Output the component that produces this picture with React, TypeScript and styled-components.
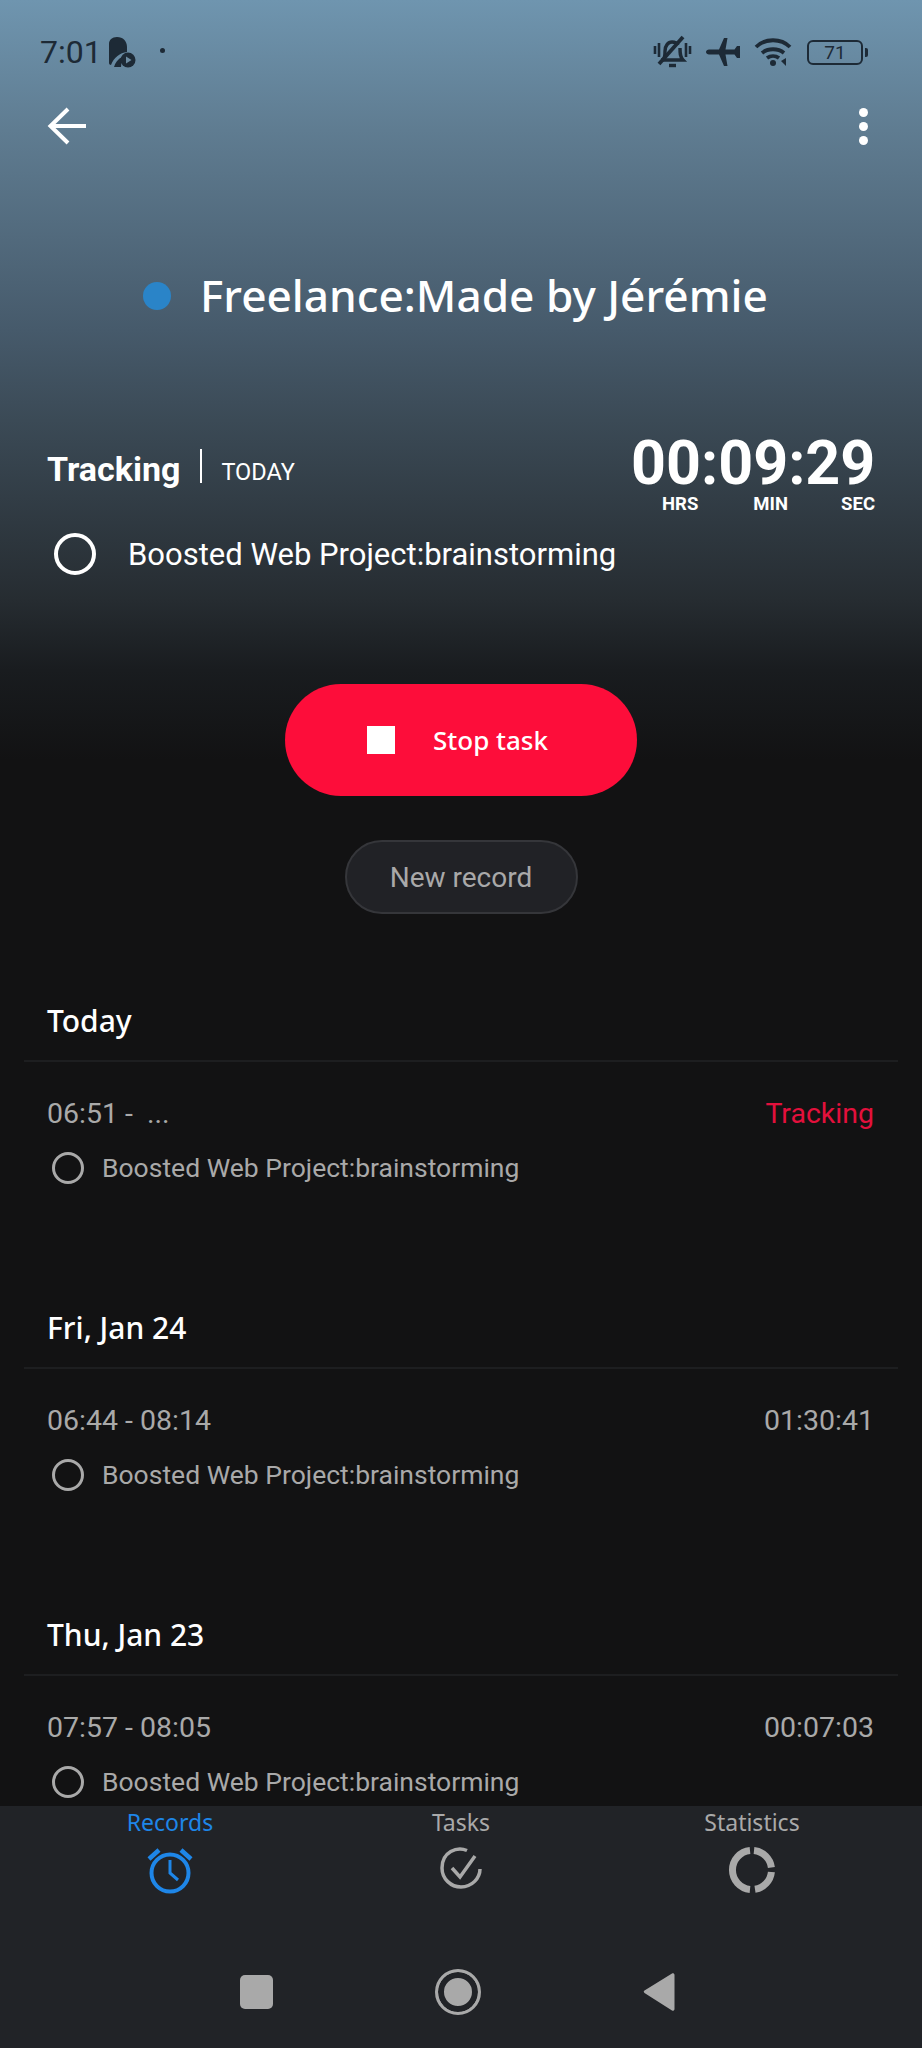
import * as React from "react";
import styled, { createGlobalStyle } from "styled-components";

const GlobalStyle = createGlobalStyle`
  html, body {
    margin: 0;
    padding: 0;
    background: #121213;
  }
  * {
    box-sizing: border-box;
  }
`;

const records = [
  { day: "Today", time: "06:51 -  ...", total: "Tracking", live: true },
  { day: "Fri, Jan 24", time: "06:44 - 08:14", total: "01:30:41", live: false },
  { day: "Thu, Jan 23", time: "07:57 - 08:05", total: "00:07:03", live: false },
];

const tabs = [
  { label: "Records", active: true, icon: <AlarmIcon /> },
  { label: "Tasks", active: false, icon: <TaskIcon /> },
  { label: "Statistics", active: false, icon: <DonutIcon /> },
];

export default function App() {
  return (
    <Screen>
      <GlobalStyle />
      <Scroller>
        <Hero>
          <StatusBar>
            <StatusLeft>
              <Clock>7:01</Clock>
              <AppBadge />
              <StatusDot />
            </StatusLeft>
            <StatusRight>
              <MuteIcon />
              <PlaneIcon />
              <WifiIcon />
              <Battery>
                <BatteryBody>71</BatteryBody>
                <BatteryTip />
              </Battery>
            </StatusRight>
          </StatusBar>
          <ActionBar>
            <BackIcon />
            <MoreButton>
              <MoreDot />
              <MoreDot />
              <MoreDot />
            </MoreButton>
          </ActionBar>
          <ClientRow>
            <ClientDot />
            <ClientName>Freelance:Made by Jérémie</ClientName>
          </ClientRow>
          <TrackingRow>
            <TrackingLabel>
              <TrackingTitle>Tracking</TrackingTitle>
              <TrackingDay>TODAY</TrackingDay>
            </TrackingLabel>
            <Timer>
              <TimerValue>00:09:29</TimerValue>
              <TimerUnits>
                <span>HRS</span>
                <span>MIN</span>
                <span>SEC</span>
              </TimerUnits>
            </Timer>
          </TrackingRow>
          <CurrentTask>
            <TaskRing $size={42} $width={4} $color="#ffffff" />
            <CurrentTaskName>Boosted Web Project:brainstorming</CurrentTaskName>
          </CurrentTask>
          <Actions>
            <StopButton>
              <StopSquare />
              <span>Stop task</span>
            </StopButton>
            <NewRecordButton>New record</NewRecordButton>
          </Actions>
        </Hero>
        {records.map((record) => (
          <DaySection key={record.day}>
            <DayTitle>{record.day}</DayTitle>
            <RecordRow>
              <RecordTimes>
                <RecordTime>{record.time}</RecordTime>
                <RecordTotal $live={record.live}>{record.total}</RecordTotal>
              </RecordTimes>
              <RecordTask>
                <TaskRing $size={32} $width={3} $color="#a9a9a9" />
                <RecordTaskName>Boosted Web Project:brainstorming</RecordTaskName>
              </RecordTask>
            </RecordRow>
          </DaySection>
        ))}
      </Scroller>
      <BottomArea>
        <TabBar>
          {tabs.map((tab) => (
            <Tab key={tab.label} $active={tab.active}>
              <TabLabel>{tab.label}</TabLabel>
              {tab.icon}
            </Tab>
          ))}
        </TabBar>
        <NavBar>
          <NavSquare />
          <NavHome />
          <NavBack viewBox="0 0 32 42">
            <path d="M29 2.500c1-.7 2.500 0 2.500 1.500v34c0 1.500-1.500 2.200-2.500 1.500L1.500 22c-1-.8-1-1.800 0-2.500z" fill="#a9a9a9" />
          </NavBack>
        </NavBar>
      </BottomArea>
    </Screen>
  );
}

function AppBadge() {
  return (
    <svg width="28" height="32" viewBox="0 0 28 32">
      <path d="M1 27V8c0-4 3-7 8-7 6 0 10 4 10 10v5c-7 1-13 5-16 13-1 0-2-1-2-2z" fill="#1d2a36" />
      <path d="M6 31c1-4 4-8 8-10l-1 10z" fill="#1d2a36" />
      <circle cx="20" cy="24" r="7.500" fill="#1d2a36" />
      <path d="M18 20.500l5.500 3.500-5.500 3.500z" fill="#6d8ca2" />
    </svg>
  );
}

function MuteIcon() {
  return (
    <svg width="39" height="34" viewBox="0 0 39 34" fill="none" stroke="#1d2a36" strokeWidth="3.400">
      <path d="M10 25c2-2 2-5 2-9 0-5 3-9 7-9 3 0 5 1 6 3M27 13c0 5 0 9 3 12H8" />
      <path d="M30 2L6 29" strokeWidth="3.800" />
      <path d="M16 30.500h7" strokeWidth="3.400" />
      <path d="M2 11v8M6 8v14M33 8v14M37 11v8" strokeWidth="2.600" />
    </svg>
  );
}

function PlaneIcon() {
  return (
    <svg width="36" height="30" viewBox="0 0 36 30">
      <path
        d="M1 15c0-1.400 1.500-2.500 3-2.500h10L19 1h3.500l-2 11.500h9L32 9h3v12h-3l-2.500-3.500h-9l2 11.500H19L14 17.500H4C2.500 17.500 1 16.400 1 15z"
        fill="#1d2a36"
      />
    </svg>
  );
}

function WifiIcon() {
  return (
    <svg width="40" height="30" viewBox="0 0 40 30" fill="none" stroke="#1d2a36" strokeWidth="3.800">
      <path d="M2 10C11 1 27 1 36 10" />
      <path d="M8 16c6-5 16-5 22 0" />
      <path d="M13 21c3.500-2.500 8.500-2.500 12 0" />
      <circle cx="19" cy="26" r="3" fill="#1d2a36" stroke="none" />
      <path d="M27 24l5-3v8z" fill="#1d2a36" stroke="none" />
    </svg>
  );
}

function BackIcon() {
  return (
    <svg width="40" height="38" viewBox="0 0 40 38" fill="none" stroke="#ffffff" strokeWidth="4">
      <path d="M39 19H4" />
      <path d="M21 2L3.500 19 21 36" />
    </svg>
  );
}

function AlarmIcon() {
  return (
    <svg width="46" height="48" viewBox="0 0 46 48" fill="none" stroke="#1e86e8" strokeWidth="4">
      <circle cx="23" cy="27" r="18.500" />
      <path d="M23 14v13l8 7" strokeWidth="3" />
      <path d="M2 13L12 4M44 13L34 4" strokeWidth="4.500" />
    </svg>
  );
}

function TaskIcon() {
  return (
    <svg width="44" height="44" viewBox="0 0 44 44" fill="none" stroke="#a9a9a9" strokeWidth="3.500">
      <path d="M28 4.500C18 0 3 6 3 22c0 11 9 19 19 19 11 0 19-9 19-18" />
      <path d="M13 22l8 9 15-21" />
    </svg>
  );
}

function DonutIcon() {
  return (
    <svg width="48" height="48" viewBox="0 0 48 48" fill="none" stroke="#a9a9a9" strokeWidth="7">
      <path d="M26 4.600A19.500 19.500 0 0 1 43.400 21.500" />
      <path d="M43.400 26A19.500 19.500 0 0 1 27 43.300" />
      <path d="M22 43.400A19.500 19.500 0 0 1 22 4.600" />
    </svg>
  );
}

const Screen = styled.div`
  width: 922px;
  height: 2048px;
  display: flex;
  flex-direction: column;
  overflow: hidden;
  background: #121213;
`;

const Scroller = styled.div`
  flex: 1;
  min-height: 0;
  overflow: hidden;
`;

const Hero = styled.section`
  height: 961px;
  padding-top: 33px;
  background: linear-gradient(
    180deg,
    #6f95af 0,
    #5f7c91 130px,
    #465a6b 330px,
    #3b4a56 420px,
    #262c31 600px,
    #191c1f 670px,
    #121213 760px
  );
`;

const StatusBar = styled.div`
  height: 38px;
  padding: 0 54px 0 40px;
  display: flex;
  align-items: center;
  justify-content: space-between;
`;

const StatusLeft = styled.div`
  display: flex;
  align-items: center;
`;

const Clock = styled.span`
  font: 400 32px "Roboto", sans-serif;
  color: #1d2a36;
  margin-right: 6px;
`;

const StatusDot = styled.span`
  width: 5px;
  height: 5px;
  margin: -4px 0 0 24px;
  border-radius: 50%;
  background: #1d2a36;
`;

const StatusRight = styled.div`
  display: flex;
  align-items: center;
  gap: 13px;
`;

const Battery = styled.div`
  display: flex;
  align-items: center;
  gap: 2px;
`;

const BatteryBody = styled.div`
  width: 56px;
  height: 25px;
  border: 2.500px solid #1d2a36;
  border-radius: 6px;
  display: flex;
  align-items: center;
  justify-content: center;
  font: 400 19px "Roboto", sans-serif;
  color: #1d2a36;
`;

const BatteryTip = styled.span`
  width: 3px;
  height: 9px;
  background: #1d2a36;
  border-radius: 0 2px 2px 0;
`;

const ActionBar = styled.div`
  height: 38px;
  margin-top: 36px;
  padding: 0 54px 0 47px;
  display: flex;
  align-items: center;
  justify-content: space-between;
`;

const MoreButton = styled.div`
  display: flex;
  flex-direction: column;
  gap: 5px;
`;

const MoreDot = styled.span`
  width: 9px;
  height: 9px;
  border-radius: 50%;
  background: #ffffff;
`;

const ClientRow = styled.div`
  height: 60px;
  margin-top: 120px;
  padding-left: 143px;
  display: flex;
  align-items: center;
`;

const ClientDot = styled.span`
  width: 28px;
  height: 28px;
  margin: 2px 29px 0 0;
  border-radius: 50%;
  background: #2a84c8;
`;

const ClientName = styled.span`
  font: 500 44.200px "Noto Sans", sans-serif;
  color: #ffffff;
  white-space: nowrap;
`;

const TrackingRow = styled.div`
  margin-top: 107px;
  padding: 0 47px 0 47px;
  display: flex;
  align-items: flex-start;
  justify-content: space-between;
`;

const TrackingLabel = styled.div`
  height: 36px;
  margin-top: 19px;
  display: flex;
  align-items: center;
`;

const TrackingTitle = styled.span`
  font: 700 34px "Roboto", sans-serif;
  color: #ffffff;
  padding-right: 22px;
  margin-right: 19px;
  position: relative;

  &::after {
    content: "";
    position: absolute;
    right: 0;
    top: 0;
    width: 2px;
    height: 34px;
    background: #ffffff;
  }
`;

const TrackingDay = styled.span`
  margin-top: 5px;
  font: 400 23.500px "Roboto", sans-serif;
  color: #ffffff;
`;

const Timer = styled.div`
  width: 244px;
`;

const TimerValue = styled.div`
  font: 700 61px/62px "Roboto", sans-serif;
  color: #ffffff;
  white-space: nowrap;
`;

const TimerUnits = styled.div`
  padding-left: 31px;
  display: flex;
  justify-content: space-between;
  font: 700 18.500px/20px "Roboto", sans-serif;
  color: #ffffff;

  span:nth-child(2) {
    margin-left: 2px;
  }
`;

const TaskRing = styled.span<{ $size: number; $width: number; $color: string }>`
  flex: none;
  width: ${({ $size }) => $size}px;
  height: ${({ $size }) => $size}px;
  border: ${({ $width }) => $width}px solid ${({ $color }) => $color};
  border-radius: 50%;
`;

const CurrentTask = styled.div`
  height: 44px;
  margin-top: 18px;
  padding-left: 54px;
  display: flex;
  align-items: center;
`;

const CurrentTaskName = styled.span`
  margin-left: 32px;
  font: 400 31px "Roboto", sans-serif;
  color: #ffffff;
`;

const Actions = styled.div`
  margin-top: 108px;
  display: flex;
  flex-direction: column;
  align-items: center;
  gap: 44px;
`;

const StopButton = styled.div`
  width: 352px;
  height: 112px;
  padding-left: 82px;
  border-radius: 56px;
  background: #fd0d3a;
  display: flex;
  align-items: center;
  gap: 38px;
  font: 500 26px "Noto Sans", sans-serif;
  color: #ffffff;
`;

const StopSquare = styled.span`
  width: 28px;
  height: 28px;
  background: #ffffff;
`;

const NewRecordButton = styled.div`
  width: 233px;
  height: 74px;
  border: 2px solid #35363a;
  border-radius: 37px;
  background: #212226;
  display: flex;
  align-items: center;
  justify-content: center;
  font: 400 28px "Roboto", sans-serif;
  color: #a9a9a9;
`;

const DaySection = styled.section`
  height: 307px;
  padding: 0 24px;
`;

const DayTitle = styled.div`
  height: 101px;
  padding: 39px 23px 0;
  border-bottom: 2px solid #1d1e20;
  font: 500 30px/42px "Noto Sans", sans-serif;
  color: #ffffff;
`;

const RecordRow = styled.div`
  padding: 34px 24px 0 24px;
`;

const RecordTimes = styled.div`
  display: flex;
  justify-content: space-between;
  font: 400 28.500px/36px "Roboto", sans-serif;
`;

const RecordTime = styled.span`
  color: #a9a9a9;
  margin-left: -1px;
  white-space: pre;
`;

const RecordTotal = styled.span<{ $live: boolean }>`
  color: ${({ $live }) => ($live ? "#e3103c" : "#a9a9a9")};
`;

const RecordTask = styled.div`
  margin-top: 18px;
  padding-left: 4px;
  display: flex;
  align-items: center;
`;

const RecordTaskName = styled.span`
  margin-left: 18px;
  font: 400 26.500px/36px "Roboto", sans-serif;
  color: #a9a9a9;
`;

const BottomArea = styled.footer`
  flex: none;
  height: 242px;
  background: #212327;
  display: flex;
  flex-direction: column;
`;

const TabBar = styled.nav`
  height: 128px;
  padding: 0 0 0 52px;
  display: grid;
  grid-template-columns: repeat(3, 236px);
  column-gap: 55px;
`;

const Tab = styled.div<{ $active: boolean }>`
  display: flex;
  flex-direction: column;
  align-items: center;
  color: ${({ $active }) => ($active ? "#1e86e8" : "#a9a9a9")};
`;

const TabLabel = styled.span`
  font: 400 23px/32px "Noto Sans", sans-serif;
  margin-bottom: 8px;
`;

const NavBar = styled.div`
  flex: 1;
  padding: 1px 247px 0 240px;
  display: flex;
  align-items: center;
  justify-content: space-between;
`;

const NavSquare = styled.span`
  width: 33px;
  height: 34px;
  border-radius: 5px;
  background: #a9a9a9;
`;

const NavHome = styled.span`
  width: 46px;
  height: 46px;
  border: 3px solid #a9a9a9;
  border-radius: 50%;
  background: #a9a9a9;
  box-shadow: inset 0 0 0 6px #212327;
`;

const NavBack = styled.svg`
  width: 32px;
  height: 42px;
`;
